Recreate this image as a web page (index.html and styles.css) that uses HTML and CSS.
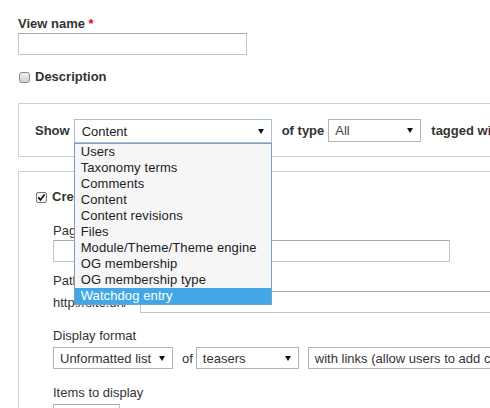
FILE: index.html
```html
<!DOCTYPE html>
<html>
<head>
<meta charset="utf-8">
<link rel="stylesheet" href="styles.css">
</head>
<body>
<div class="page">
  <label class="lbl-b block">View name <span class="req">*</span></label>
  <input class="text-input name-input" type="text">

  <div class="check-row desc">
    <svg class="cb" width="11" height="11" viewBox="0 0 11 11"><defs><linearGradient id="g1" x1="0" y1="0" x2="0" y2="1"><stop offset="0" stop-color="#f4f4f4"/><stop offset="1" stop-color="#cfcfcf"/></linearGradient></defs><rect x="0.5" y="0.5" width="10" height="10" rx="2.5" fill="url(#g1)" stroke="#8c8c8c"/></svg>
    <span class="lbl-b">Description</span>
  </div>

  <div class="fs fs-show">
    <div class="row">
      <span class="lbl-b">Show</span>
      <div class="select sel-content">
        <span>Content</span>
        <svg class="arrow" width="6" height="5" viewBox="0 0 6 5"><polygon points="0,0 6,0 3,5" fill="#111"/></svg>
        <ul class="dropdown">
          <li>Users</li>
          <li>Taxonomy terms</li>
          <li>Comments</li>
          <li>Content</li>
          <li>Content revisions</li>
          <li>Files</li>
          <li>Module/Theme/Theme engine</li>
          <li>OG membership</li>
          <li>OG membership type</li>
          <li class="hl">Watchdog entry</li>
        </ul>
      </div>
      <span class="lbl-b of-type">of type</span>
      <div class="select sel-all">
        <span>All</span>
        <svg class="arrow" width="6" height="5" viewBox="0 0 6 5"><polygon points="0,0 6,0 3,5" fill="#111"/></svg>
      </div>
      <span class="lbl-b tagged">tagged with</span>
    </div>
  </div>

  <div class="fs fs-page">
    <div class="check-row">
      <svg class="cb" width="11" height="11" viewBox="0 0 11 11"><rect x="0.5" y="0.5" width="10" height="10" rx="1.5" fill="#f6f6f6" stroke="#7a7a7a"/><path d="M2.3 5.4 L4.4 7.9 L8.6 2.4" fill="none" stroke="#111" stroke-width="1.7"/></svg>
      <span class="lbl-b">Create a page</span>
    </div>
    <div class="sub">
      <label class="lbl block lbl-first">Page title</label>
      <input class="text-input title-input" type="text">

      <label class="lbl block lbl-path">Path</label>
      <div class="row path-row">
        <span class="prefix">http://site.url/</span>
        <input class="text-input path-input" type="text">
      </div>

      <label class="lbl block lbl-display">Display format</label>
      <div class="row display-row">
        <div class="select sel-fmt">
          <span>Unformatted list</span>
          <svg class="arrow" width="6" height="5" viewBox="0 0 6 5"><polygon points="0,0 6,0 3,5" fill="#111"/></svg>
        </div>
        <span class="of">of</span>
        <div class="select sel-teasers">
          <span>teasers</span>
          <svg class="arrow" width="6" height="5" viewBox="0 0 6 5"><polygon points="0,0 6,0 3,5" fill="#111"/></svg>
        </div>
        <div class="select sel-links">
          <span>with links (allow users to add comments, etc.)</span>
        </div>
      </div>

      <label class="lbl block lbl-items">Items to display</label>
      <input class="text-input items-input" type="text">
    </div>
  </div>
</div>
</body>
</html>
```

FILE: styles.css
```css
html, body {
  overflow: hidden;
}
body {
  margin: 0;
  font-family: "Liberation Sans", Arial, sans-serif;
  font-size: 13px;
  color: #333;
  background: #fff;
}
.page {
  padding: 16px 0 0 18px;
  width: 720px;
}
.block { display: block; }
.lbl-b {
  font-weight: bold;
  line-height: 16px;
  color: #333;
}
.lbl {
  line-height: 16px;
  color: #333;
}
.req { color: #e00; }

.text-input {
  display: block;
  box-sizing: border-box;
  height: 22px;
  margin: 0;
  padding: 0;
  border: 1px solid #c4c4c4;
  border-top-color: #a9a9a9;
  background: #fff;
  font: inherit;
}
.name-input {
  margin-top: 1px;
  width: 229px;
}

.check-row {
  display: flex;
  align-items: center;
  height: 16px;
}
.cb {
  display: block;
  margin-left: 1px;
  margin-right: 5px;
  flex: none;
}
.desc { margin-top: 14px; }

.fs {
  border: 1px solid #d0d0d0;
  width: 680px;
}
.fs-show {
  margin-top: 18px;
  padding: 15px 0 13px 16px;
}
.fs-page {
  margin-top: 14px;
  padding: 17px 0 40px 16px;
}

.row {
  display: flex;
  align-items: center;
}
.select {
  position: relative;
  box-sizing: border-box;
  display: flex;
  align-items: center;
  height: 24px;
  padding: 0 7px 0 6px;
  border: 1px solid #b4b4b4;
  background: #fff;
  color: #333;
  white-space: nowrap;
  flex: none;
}
.select .arrow {
  display: block;
  margin-left: auto;
  flex: none;
}
.sel-content {
  width: 198px;
  margin-left: 4px;
  padding-left: 7px;
  border-color: #a9c0d8;
  color: #222;
}
.of-type { margin-left: 10px; }
.sel-all {
  width: 93px;
  height: 23px;
  margin-left: 4px;
  align-self: flex-start;
  color: #444;
}
.tagged {
  margin-left: 10px;
  white-space: nowrap;
}

.dropdown {
  position: absolute;
  left: -1px;
  top: 23px;
  width: 198px;
  box-sizing: border-box;
  margin: 0;
  padding: 0;
  list-style: none;
  border: 1px solid #7e9fc2;
  background: #f6f6f6;
  z-index: 10;
}
.dropdown li {
  line-height: 16px;
  padding-left: 6px;
  color: #222;
  white-space: nowrap;
  letter-spacing: 0.1px;
}
.dropdown li.hl {
  background: #42a7e4;
  color: #fff;
}

.sub { margin-left: 18px; }
.lbl-first { margin-top: 18px; }
.title-input {
  margin-top: 1px;
  width: 397px;
}
.lbl-path { margin-top: 11px; }
.path-row { margin-top: 2px; }
.prefix {
  width: 87px;
  flex: none;
  white-space: nowrap;
}
.path-input { width: 400px; }
.lbl-display { margin-top: 15px; }
.display-row { margin-top: 3px; }
.display-row .select { height: 22px; }
.sel-fmt { width: 120px; }
.of {
  margin-left: 9px;
  margin-right: 3px;
}
.sel-teasers { width: 103px; }
.sel-links {
  width: 320px;
  margin-left: 9px;
}
.lbl-items { margin-top: 16px; }
.items-input {
  margin-top: 3px;
  width: 67px;
}
```
